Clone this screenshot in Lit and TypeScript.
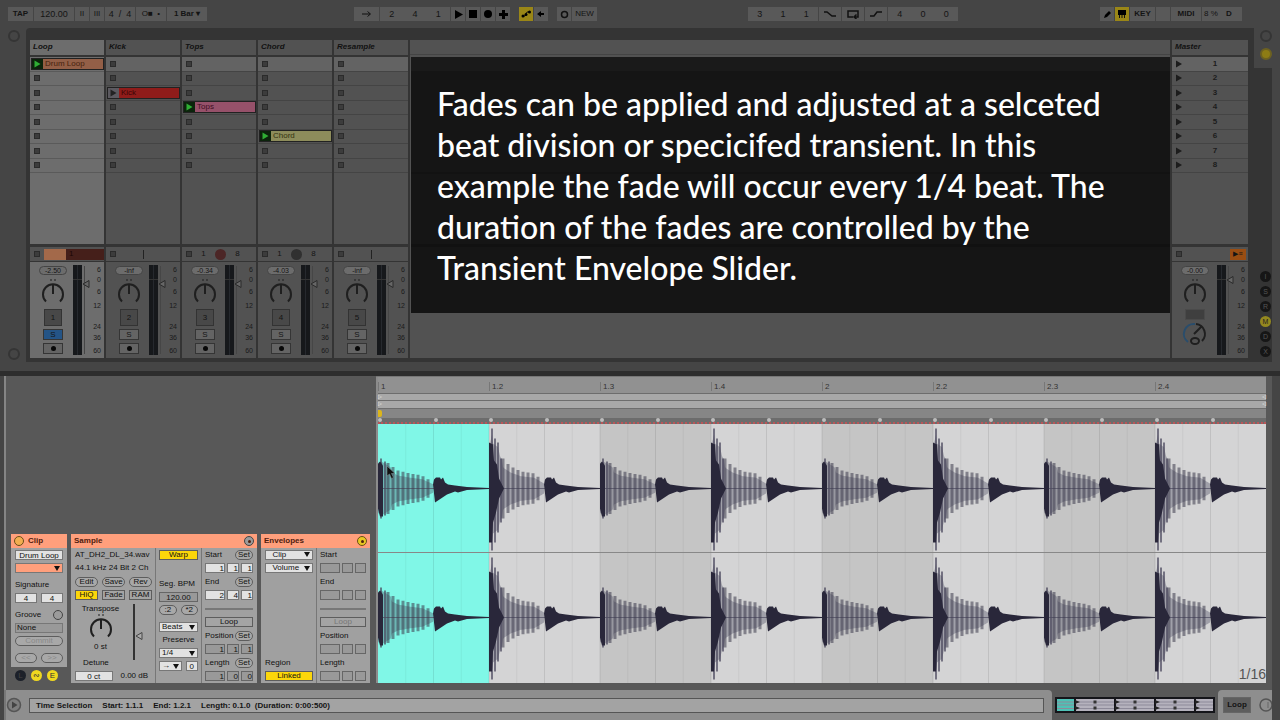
import { LitElement, html, svg, css } from "lit";
import { customElement } from "lit/decorators.js";

interface Clip { row: number; name: string; kind: string; playing: boolean; }
interface Track { name: string; num: string; vol: string; clip?: Clip; status: string; selected?: boolean; }

const TRACKS: Track[] = [
  { name: "Loop", num: "1", vol: "-2.50", clip: { row: 0, name: "Drum Loop", kind: "orange", playing: true }, status: "progress", selected: true },
  { name: "Kick", num: "2", vol: "-inf", clip: { row: 2, name: "Kick", kind: "red", playing: false }, status: "line" },
  { name: "Tops", num: "3", vol: "-0.34", clip: { row: 3, name: "Tops", kind: "pink", playing: true }, status: "pieRed" },
  { name: "Chord", num: "4", vol: "-4.03", clip: { row: 5, name: "Chord", kind: "yellow", playing: true }, status: "pie" },
  { name: "Resample", num: "5", vol: "-inf", status: "line" },
];
const ROWS = [0, 1, 2, 3, 4, 5, 6, 7];
const BEATS = ["1", "1.2", "1.3", "1.4", "2", "2.2", "2.3", "2.4"];
const SCALE: [string, number][] = [["6", 8], ["0", 18], ["6", 30], ["12", 44], ["24", 65], ["36", 76], ["60", 89]];

const knob = (cls = "") => svg`
  <svg class="knob ${cls}" width="26" height="28" viewBox="0 0 26 28" aria-hidden="true">
    <path d="M10 1h2M14 1h2" stroke="currentColor" fill="none"/>
    <path class="arc" d="M6 22.5A10 10 0 1 1 20 22.5" fill="none" stroke="currentColor" stroke-width="2"/>
    <path d="M13 15V5" stroke="currentColor" stroke-width="2"/>
  </svg>`;

const meter = (y = 22) => svg`
  <svg class="meter" width="32" height="96" viewBox="0 0 32 96" aria-hidden="true">
    <rect x="1" y="3" width="9" height="90" fill="#16181b"/>
    <path d="M5.5 3V93" stroke="#26292e"/>
    <path d="M1 17.5H10" stroke="#333"/>
    <path d="M12.5 4V92" stroke="#464646" stroke-width="1"/>
    <path d="M11 ${y}L17 ${y - 3.5}V${y + 3.5}Z" fill="#666" stroke="#2a2a2a"/>
    ${SCALE.map(([t, ty]) => svg`<text x="29" y="${ty + 2}" text-anchor="end">${t}</text>`)}
  </svg>`;

const play = svg`<svg width="10" height="10" viewBox="0 0 10 10" aria-hidden="true"><path d="M2 1.5L8 5L2 8.5Z" fill="currentColor"/></svg>`;

/* Half height of the decaying part of a beat at distance x from its start. */
function envelope(x: number, loud: boolean): number {
  const pts = loud
    ? [[0, 46], [1, 50], [3, 60], [4, 50], [9, 46], [11, 36], [15, 28], [22, 22], [32, 17], [45, 15], [55, 7]]
    : [[0, 27], [3, 30], [8, 27], [13, 23], [20, 18], [32, 15], [44, 13], [55, 6]];
  for (let i = 1; i < pts.length; i++) {
    if (x <= pts[i][0]) {
      const [x0, y0] = pts[i - 1];
      const [x1, y1] = pts[i];
      return y0 + ((y1 - y0) * (x - x0)) / (x1 - x0);
    }
  }
  return 6;
}

function beatWave(i: number, cy: number) {
  const x0 = i * 111;
  const loud = i % 2 === 1;
  const up: string[] = [];
  const dn: string[] = [];
  for (let x = 0; x < 56; x++) {
    const h = envelope(x, loud) * (x < 14 ? 0.9 : 0.72);
    up.push(`${x0 + x},${cy - h}`);
    dn.unshift(`${x0 + x},${cy + h}`);
  }
  let bars = "";
  for (let x = loud ? 14 : 10; x < 54; x += 5) {
    const h = envelope(x, loud);
    bars += `M${x0 + x} ${cy - h}V${cy + h}`;
  }
  const head = loud
    ? `M${x0} ${cy - 46}L${x0 + 4} ${cy - 44}L${x0 + 5} ${cy - 28}L${x0 + 8} ${cy - 24}L${x0 + 10} ${cy - 10}L${x0 + 15} ${cy}L${x0 + 10} ${cy + 10}L${x0 + 7} ${cy + 24}L${x0 + 4} ${cy + 34}L${x0 + 3} ${cy + 54}H${x0}Z`
    : `M${x0} ${cy - 25}L${x0 + 2} ${cy - 27}L${x0 + 5} ${cy - 23}V${cy + 28}H${x0 + 2}L${x0} ${cy + 20}Z`;
  const h = x0 + 55;
  const hit = `M${h} ${cy - 4}L${h + 1} ${cy - 9}L${h + 3} ${cy - 11}H${h + 7}L${h + 8} ${cy - 9}L${h + 10} ${cy - 11}L${h + 12} ${cy - 6}L${h + 15} ${cy - 4}L${h + 22} ${cy - 3}L${h + 34} ${cy - 1.5}L${h + 56} ${cy - 0.5}V${cy + 0.5}L${h + 34} ${cy + 1.5}L${h + 25} ${cy + 4}L${h + 22} ${cy + 3}L${h + 14} ${cy + 6}L${h + 8} ${cy + 10}L${h + 2} ${cy + 14}Z`;
  const body = loud
    ? `M${x0 + 3} ${cy - 60}V${cy + 62}M${x0 + 6} ${cy - 50}V${cy + 54}M${x0 + 9} ${cy - 46}V${cy + 44}M${x0 + 12} ${cy - 30}V${cy + 34}`
    : `M${x0 + 3} ${cy - 30}V${cy + 30}M${x0 + 7} ${cy - 27}V${cy + 27}`;
  return svg`
    <polygon points="${up.join(" ")} ${dn.join(" ")}" fill="#4d4b60" fill-opacity=".38"/>
    <path d="${bars}" stroke="#3c3a4c" stroke-opacity=".55" stroke-width="3" fill="none"/>
    <path d="${body}" stroke="#4a475c" stroke-opacity=".7" stroke-width="2" fill="none"/>
    <path d="${head}" fill="#29273a"/>
    <path d="${hit}" fill="#29273a"/>`;
}

@customElement("app-root")
export class AppRoot extends LitElement {
  static styles = css`
    :host { display: flex; flex-direction: column; min-height: 100vh; background: #454545; color: #141414;
      font: 8px/10px "Liberation Sans", Arial, sans-serif; }
    * { box-sizing: border-box; }
    button, input, select { font: inherit; color: inherit; margin: 0; padding: 0; border: 0; border-radius: 0; background: none; min-width: 0; appearance: none; text-align: center; }
    h2, h3, p { margin: 0; font: inherit; }
    svg { display: block; flex: none; }

    /* transport */
    .transport { display: grid; grid-template-columns: 346fr 394fr 352fr 172px; align-items: start; height: 28px; padding: 7px 8px 0; }
    .strip { display: flex; gap: 1px; height: 14px; }
    .strip > * { background: #595959; height: 14px; display: flex; align-items: center; justify-content: center; color: #141414; }
    .strip .on { background: #9a8617; }
    .w14 { width: 14px; } .w22 { width: 22px; } .w25 { width: 25px; } .w30 { width: 30px; } .w40 { width: 40px; } .w72 { width: 70px; }
    .strip input, .pos { font-size: 9px; }
    .pos { display: flex; justify-content: space-around; }
    .gap { margin-left: 8px; }
    .b { font-weight: bold; }

    /* session */
    .session { display: flex; padding-right: 8px; }
    .lrail { width: 26px; padding: 2px 8px; display: flex; flex-direction: column; justify-content: space-between; color: #303030; }
    .frame { flex: 1; min-width: 0; display: flex; background: #343434; border-radius: 4px 0 0 0; padding: 12px 0 4px 4px; }
    .tracks { flex: 1; min-width: 0; display: grid; grid-template-columns: repeat(5, 74px) minmax(0, 1fr) 76px; gap: 2px; }
    .track { display: flex; flex-direction: column; background: #343434; }
    .name { height: 15px; background: #525252; padding: 2px 3px; font-weight: bold; font-style: italic; color: #111; }
    .slots { height: 116px; margin-top: 2px; display: grid; grid-template-rows: repeat(8, minmax(0, 1fr)); background: #525252; }
    .slot { display: flex; align-items: center; border-bottom: 1px solid #444; padding-left: 4px; }
    .slot.first { background: #636363; }
    .stop { width: 6px; height: 6px; background: #3c3c3c; border: 1px solid #2b2b2b; }
    .clip { flex: 1; height: 12px; margin-left: -3px; display: flex; border: 1px solid #222; background: #222; }
    .clip svg { background: #0c240c; color: #2fae34; width: 11px; }
    .clip.idle svg { background: #5c5a60; color: #222; }
    .clip span { flex: 1; text-align: left; padding-left: 2px; }
    .orange span { background: #935f47; color: #46210d; }
    .red span { background: #8f1c1a; color: #3a0505; }
    .pink span { background: #96516a; color: #400d22; }
    .yellow span { background: #8d8c5b; color: #33320f; }
    .empty { flex: 1; min-height: 71px; background: #525252; }
    .status { height: 14px; margin-top: 3px; background: #525252; display: flex; align-items: center; padding-left: 4px; gap: 6px; }
    .status .bar { flex: 1; display: flex; height: 11px; background: #451f1a; margin-left: -2px; color: #1c0605; }
    .status .bar i { width: 22px; background: #a3694a; margin-right: 3px; }
    .status .vline { width: 1px; height: 9px; background: #222; margin-left: 21px; }
    .status .pie { width: 11px; height: 11px; border-radius: 50%; background: #303030; }
    .status .pie.r { background: #4c2626; }
    .status .n { width: 11px; text-align: center; }
    .mix { height: 96px; margin-top: 1px; background: #525252; display: flex; justify-content: space-between; }
    .strips { width: 42px; display: flex; flex-direction: column; align-items: center; padding: 4px 0 0 4px; }
    .vol { width: 28px; height: 9px; border-radius: 5px; background: #6c6c6c; border: 1px solid #444; line-height: 7px; font-size: 7px; }
    .knob { margin: 4px 0 2px; color: #1f1f1f; }
    .sq { width: 18px; height: 17px; border: 1px solid #333; background: #484848; }
    .small { width: 20px; height: 11px; margin-top: 3px; border: 1px solid #353535; background: #646464; display: grid; place-items: center; line-height: 9px; }
    .small.solo { background: #245486; }
    .rec { width: 5px; height: 5px; border-radius: 50%; background: #080808; }
    .meter text { font: 7px "Liberation Sans", sans-serif; fill: #1a1a1a; }
    .sel .name, .sel .slot, .sel .empty, .sel .mix { background: #6d6d6d; }
    .sel .slot { border-bottom-color: #5a5a5a; }
    .zone { display: flex; flex-direction: column; background: #525252; }
    .zone .line { height: 15px; border-bottom: 1px solid #444; }
    .note { margin: 2px 0 0 1px; padding: 26px 0 25px 26px; background: linear-gradient(#1a1a1a 14px, #151515 14px 115px, #121212 115px 117px, #151515 117px 187px, #111 187px 190px, #151515 190px);
      color: #fff; font: 500 32px/41px Lato, sans-serif; white-space: nowrap; }
    .note span { display: block; }
    .master .slot { color: #1c1c1c; padding-left: 2px; }
    .master .slot span { flex: 1; text-align: center; font-weight: bold; padding-right: 2px; }
    .master .status { justify-content: space-between; padding-right: 2px; }
    .back { background: #9a4d12; width: 16px; height: 11px; font-size: 7px; }
    .cue { width: 20px; height: 11px; background: #3f3f3f; border: 1px solid #4a4a4a; }
    .rrail { width: 24px; margin-top: -12px; display: flex; flex-direction: column; align-items: flex-end; justify-content: space-between; }
    .rtop { width: 18px; height: 40px; background: #454545; padding: 2px 0 0 6px; display: flex; flex-direction: column; gap: 6px; }
    .dots { display: flex; flex-direction: column; gap: 4px; padding: 0 1px 1px 0; }
    .dot { width: 11px; height: 11px; border-radius: 50%; background: #161616; color: #555; font-size: 7px; line-height: 11px; }
    .dot.y { background: #94881f; color: #222; }
    .ring { width: 12px; height: 12px; border-radius: 50%; border: 2px solid #353535; }
    .ring.y { border-color: #6d6120; background: #8d7c14; }
    .divide { height: 14px; border-bottom: 5px solid #2d2d2d; }

    /* detail view */
    .detail { flex: 1; display: flex; margin: 0 8px 0 4px; padding: 0 6px 7px 5px; background: #585858; border-left: 2px solid #858585; }
    .boxes { width: 365px; display: flex; align-items: flex-end; gap: 4px; }
    .panel { background: #a0a0a0; color: #111; }
    .title { height: 14px; background: #ff9f7c; display: flex; align-items: center; padding: 0 3px; gap: 4px; font-weight: bold; color: #50200e; }
    .title .sp { flex: 1; }
    .lamp { width: 10px; height: 10px; border-radius: 50%; border: 1px solid #6b4d19; background: #f2ae50; display: grid; place-items: center; }
    .lamp.g { background: #9b9b9b; border-color: #444; }
    .lamp.yl { background: #e9c820; }
    .lamp::after { content: ""; width: 3px; height: 3px; border-radius: 50%; background: currentColor; }
    .lamp.o::after { display: none; }
    .clipcol { width: 56px; }
    .clipbody { display: flex; flex-direction: column; gap: 3px; padding: 2px 4px 3px; height: 119px; }
    .row { display: flex; align-items: center; gap: 4px; }
    .row > * { flex: 1; }
    .between { display: flex; align-items: center; justify-content: space-between; }
    .push { margin-top: 4px; }
    .field { height: 10px; width: 100%; background: #e2e2e2; border: 1px solid #777; line-height: 8px; }
    .off { background: #999; border-color: #666; }
    .pill { height: 10px; border: 1px solid #5d5d5d; border-radius: 5px; background: #a8a8a8; line-height: 8px; }
    .pill.dim { color: #888; }
    .btn { height: 10px; width: 100%; border: 1px solid #5d5d5d; background: #a4a4a4; line-height: 8px; }
    .btn.dim { color: #777; }
    .yel { background: #fbd60a; }
    .field.sel2 { text-align: left; padding: 0 8px 0 2px; background: #e2e2e2 url("data:image/svg+xml,%3Csvg xmlns='http://www.w3.org/2000/svg' width='6' height='5'%3E%3Cpath d='M0 0h6l-3 5z' fill='%23111'/%3E%3C/svg%3E") no-repeat right 2px center; }
    .field.tint { background-color: #ff9f7c; }
    .field.none { background: #999; text-align: left; padding-left: 1px; }
    .bubbles { display: flex; gap: 5px; height: 16px; padding: 3px 4px 0; }
    .bubble { width: 11px; height: 11px; border-radius: 50%; background: #f0d820; color: #333; line-height: 11px; font-size: 8px; }
    .bubble.k { background: #1c2029; color: #444; }
    .sample { width: 186px; }
    .env { width: 109px; }
    .cols { display: flex; padding: 0 4px; height: 135px; }
    .cols > * + * { border-left: 1px solid #777; margin-left: 3px; padding-left: 3px; }
    .ten { display: grid; grid-template-rows: repeat(10, minmax(0, 1fr)); align-items: center; }
    .ca { width: 77px; white-space: nowrap; }
    .cb { width: 43px; display: flex; flex-direction: column; gap: 3px; padding-top: 2px; }
    .cc { flex: 1; }
    .cb .seg { margin-top: 16px; white-space: nowrap; }
    .triple { display: grid; grid-template-columns: 20px 1fr 1fr; gap: 2px; }
    .triple input { text-align: right; }
    .set { width: 18px; flex: none; }
    .hr { height: 2px; background: #777; }
    .tr { grid-row: 5 / 9; display: flex; height: 100%; }
    .tr > div { flex: 1; display: flex; flex-direction: column; align-items: center; padding-top: 2px; }
    .tr .knob { margin: 0; }
    .tr .fader { margin-top: 1px; }
    .det { padding-left: 8px; }
    .center { text-align: center; }
    .envl { width: 48px; }
    .start9 { grid-row: 9; }
    .start10 { grid-row: 10; }

    /* sample editor */
    .editor { flex: 1; min-width: 0; display: flex; flex-direction: column; background: #8c8c8c; border-top: 1px solid #777; padding-left: 2px; position: relative; }
    .ruler { display: grid; grid-template-columns: repeat(8, minmax(0, 1fr)); height: 16px; padding-top: 5px; background: #919191; }
    .ruler span { border-left: 1px solid #777; padding-left: 2px; height: 9px; line-height: 9px; color: #333; }
    .lane { height: 8px; border: solid #6d6d6d; border-width: 1px 0; background: #a8a8a8; display: flex; justify-content: space-between; color: #ddd; line-height: 6px; }
    .lane + .lane { border-top: 0; }
    .mark { height: 9px; background: #868686; }
    .mark i { display: block; width: 4px; height: 7px; margin-top: 1px; background: #dbb51a; border-radius: 0 2px 2px 0; }
    .trans { height: 6px; display: grid; grid-template-columns: repeat(16, minmax(0, 1fr)); background: #6c6c6c; border-bottom: 2px dotted #b95558; }
    .trans i { width: 4px; height: 4px; background: #bdbdbd; border-radius: 50%; }
    .waves { flex: 1; min-height: 240px; width: 100%; }
    .grid { position: absolute; right: 0; bottom: 0; font-size: 14px; line-height: 17px; color: #555; }
    .cursor { position: absolute; left: 10px; top: 89px; }

    /* status bar */
    .foot { height: 30px; display: flex; align-items: center; gap: 3px; margin: 0 8px 0 4px; background: #585858; }
    .fleft { flex: 1; min-width: 0; height: 30px; background: #8e8e8e; border-left: 2px solid #777; display: flex; align-items: center; gap: 7px; padding-right: 8px; border-radius: 0 4px 0 0; }
    .msg { flex: 1; height: 15px; border: 1px solid #555; background: #a3a3a3; font-weight: bold; line-height: 13px; padding-left: 6px; display: flex; gap: 10px; }
    .over { width: 160px; height: 16px; }
    .fright { width: 54px; height: 30px; background: #8e8e8e; display: flex; align-items: center; gap: 8px; padding-left: 5px; border-radius: 4px 0 0 0; overflow: hidden; }
    .lp { width: 28px; height: 16px; background: #5e5e5e; border: 1px solid #666; font-weight: bold; flex: none; }
  `;

  private slotCell(t: Track, r: number) {
    const c = t.clip;
    return html`<div class="slot ${r === 0 ? "first" : ""}">
      ${c && c.row === r
        ? html`<button class="clip ${c.kind} ${c.playing ? "" : "idle"}">${play}<span>${c.name}</span></button>`
        : html`<button class="stop" aria-label="Stop"></button>`}
    </div>`;
  }

  private status(t: Track) {
    if (t.status === "progress") return html`<span class="bar"><i></i>1</span>`;
    if (t.status === "line") return html`<span class="vline"></span>`;
    return html`<span class="n">1</span><span class="pie ${t.status === "pieRed" ? "r" : ""}"></span><span class="n">8</span>`;
  }

  private track(t: Track) {
    return html`<section class="track ${t.selected ? "sel" : ""}">
      <h2 class="name">${t.name}</h2>
      <div class="slots">${ROWS.map((r) => this.slotCell(t, r))}</div>
      <div class="empty"></div>
      <div class="status"><button class="stop" aria-label="Stop"></button>${this.status(t)}</div>
      <div class="mix">
        <div class="strips">
          <input class="vol" aria-label="Volume" .value=${t.vol}>
          ${knob()}
          <button class="sq">${t.num}</button>
          <button class="small ${t.selected ? "solo" : ""}">S</button>
          <button class="small" aria-label="Arm"><span class="rec"></span></button>
        </div>
        ${meter()}
      </div>
    </section>`;
  }

  private triple(label: string, vals: string[], off = false) {
    return html`<div class="triple">${vals.map((v) => html`<input class="field ${off ? "off" : ""}" aria-label=${label} .value=${v}>`)}</div>`;
  }

  private region(set: boolean) {
    const v = (a: string[]) => (set ? a : ["", "", ""]);
    const head = (n: string) => html`<div class="between"><span>${n}</span>${set ? html`<button class="pill set">Set</button>` : ""}</div>`;
    return html`<div class="ten cc">
      ${head("Start")}${this.triple("Start", v(["1", "1", "1"]), !set)}
      ${head("End")}${this.triple("End", v(["2", "4", "1"]), !set)}
      <div class="hr"></div>
      <button class="btn ${set ? "" : "dim"}">Loop</button>
      ${head("Position")}${this.triple("Position", v(["1", "1", "1"]), true)}
      ${head("Length")}${this.triple("Length", v(["1", "0", "0"]), true)}
    </div>`;
  }

  render() {
    return html`
      <header class="transport">
        <div class="strip">
          <button class="w25 b">TAP</button><input class="w40" aria-label="Tempo" value="120.00"><button class="w14">II</button><button class="w14">III</button>
          <input class="w30" aria-label="Time signature" value="4  /  4"><button class="w30">O■&nbsp; •</button><button class="w40 b">1 Bar ▾</button>
        </div>
        <div class="strip">
          <button class="w25" aria-label="Follow">
            <svg width="10" height="8" viewBox="0 0 10 8"><path d="M0 4H8M5.5 1.5L8.5 4L5.5 6.5" stroke="#111" fill="none"/></svg></button>
          <div class="pos w72"><span>2</span><span>4</span><span>1</span></div>
          <button class="w14" aria-label="Play"><svg width="9" height="9" viewBox="0 0 9 9"><path d="M1 0L9 4.5L1 9Z"/></svg></button>
          <button class="w14" aria-label="Stop"><svg width="8" height="8" viewBox="0 0 8 8"><path d="M0 0H8V8H0Z"/></svg></button>
          <button class="w14" aria-label="Record"><svg width="8" height="8" viewBox="0 0 8 8"><circle cx="4" cy="4" r="4"/></svg></button>
          <button class="w14" aria-label="Overdub"><svg width="9" height="9" viewBox="0 0 9 9"><path d="M4.5 0V9M0 4.5H9" stroke="#000" stroke-width="3"/></svg></button>
          <button class="w14 on gap" aria-label="Automation"><svg width="10" height="8" viewBox="0 0 10 8"><path d="M1 6H4L6 2H9" stroke="#111" fill="none"/><circle cx="2" cy="6" r="1.5"/><circle cx="5" cy="4.5" r="1.5"/><circle cx="8.5" cy="2" r="1.5"/></svg></button>
          <button class="w14" aria-label="Re-enable"><svg width="8" height="8" viewBox="0 0 8 8"><path d="M0 4L4 1V3H7V5H4V7Z"/></svg></button>
          <button class="w14 gap" aria-label="Session record"><svg width="9" height="9" viewBox="0 0 9 9"><circle cx="4.5" cy="4.5" r="3" fill="none" stroke="#111" stroke-width="1.5"/></svg></button>
          <button class="w25">NEW</button>
        </div>
        <div class="strip">
          <div class="pos w72"><span>3</span><span>1</span><span>1</span></div>
          <button class="w22" aria-label="Punch in"><svg width="12" height="8" viewBox="0 0 12 8"><path d="M0 2H3L8 6H12" stroke="#111" stroke-width="1.5" fill="none"/></svg></button>
          <button class="w22" aria-label="Loop"><svg width="12" height="9" viewBox="0 0 12 9"><path d="M6 7H1V1H11V7H8M9.5 4.5L7 7L9.5 9" stroke="#111" stroke-width="1.5" fill="none"/></svg></button>
          <button class="w22" aria-label="Punch out"><svg width="12" height="8" viewBox="0 0 12 8"><path d="M0 6H4L7 2H12" stroke="#111" stroke-width="1.5" fill="none"/></svg></button>
          <div class="pos w72"><span>4</span><span>0</span><span>0</span></div>
        </div>
        <div class="strip">
          <button class="w14" aria-label="Draw"><svg width="9" height="9" viewBox="0 0 9 9"><path d="M1 8L2 5L6 1L8 3L4 7Z"/></svg></button>
          <button class="w14 on" aria-label="Keyboard"><svg width="8" height="8" viewBox="0 0 8 8"><path d="M0 0H8V5H0Z"/><path d="M1.5 5V8M4 5V8M6.5 5V8" stroke="#111"/></svg></button>
          <button class="w25 b">KEY</button><span class="w14"></span><button class="w30 b">MIDI</button><span class="w40">8 %</button><button class="w22 b">D</button>
        </div>
      </header>

      <main class="session">
        <div class="lrail"><span class="ring"></span><span class="ring"></span></div>
        <div class="frame">
          <div class="tracks">
            ${TRACKS.map((t) => this.track(t))}
            <div class="zone">
              <div class="line"></div>
              <p class="note"><span>Fades can be applied and adjusted at a selceted</span><span>beat division or specicifed transient. In this</span><span>example the fade will occur every 1/4 beat. The</span><span>duration of the fades are controlled by the</span><span>Transient Envelope Slider.</span></p>
            </div>
            <section class="track master">
              <h2 class="name">Master</h2>
              <div class="slots">${ROWS.map((r) => html`<div class="slot ${r === 0 ? "first" : ""}">${play}<span>${r + 1}</span></div>`)}</div>
              <div class="empty"></div>
              <div class="status"><button class="stop" aria-label="Stop all"></button><button class="back" aria-label="Back to arrangement">▶≡</button></div>
              <div class="mix">
                <div class="strips"><input class="vol" aria-label="Master volume" value="-0.00">${knob()}
                  <button class="cue" aria-label="Cue"></button>
                  <svg width="26" height="26" viewBox="0 0 26 26" aria-hidden="true"><path d="M6 22A10 10 0 0 1 13 4" stroke="#294d6c" stroke-width="2" fill="none"/><path d="M14 4A10 10 0 0 1 20 21M12 14L19 7M9 21a4 3 0 1 0 8 0a4 3 0 1 0-8 0" stroke="#1f1f1f" stroke-width="2" fill="none"/></svg>
                </div>
                ${meter(18)}
              </div>
            </section>
          </div>
          <div class="rrail">
            <div class="rtop"><span class="ring"></span><span class="ring y"></span></div>
            <div class="dots">${["I", "S", "R", "M", "D", "X"].map((d) => html`<button class="dot ${d === "M" ? "y" : ""}">${d}</button>`)}</div>
          </div>
        </div>
      </main>
      <div class="divide"></div>

      <section class="detail">
        <div class="boxes">
          <div class="clipcol">
            <div class="panel">
              <h3 class="title"><span class="lamp o"></span>Clip</h3>
              <div class="clipbody">
                <input class="field" aria-label="Clip name" value="Drum Loop">
                <select class="field sel2 tint" aria-label="Clip color"><option></option></select>
                <span class="push">Signature</span>
                <div class="row"><input class="field" aria-label="Numerator" value="4"><input class="field" aria-label="Denominator" value="4"></div>
                <div class="between push"><span>Groove</span><span class="lamp g o"></span></div>
                <select class="field none" aria-label="Groove"><option>None</option></select>
                <button class="pill dim">Commit</button>
                <div class="row push"><button class="pill dim">&lt;&lt;</button><button class="pill dim">&gt;&gt;</button></div>
              </div>
            </div>
            <div class="bubbles"><button class="bubble k">L</button><button class="bubble">∾</button><button class="bubble">E</button></div>
          </div>

          <div class="panel sample">
            <h3 class="title">Sample<span class="sp"></span><span class="lamp g"></span></h3>
            <div class="cols">
              <div class="ten ca">
                <span>AT_DH2_DL_34.wav</span><span>44.1 kHz 24 Bit 2 Ch</span>
                <div class="row"><button class="pill">Edit</button><button class="pill">Save</button><button class="pill">Rev</button></div>
                <div class="row"><button class="btn yel">HiQ</button><button class="btn">Fade</button><button class="btn">RAM</button></div>
                <div class="tr">
                  <div><span>Transpose</span>${knob()}<span>0 st</span></div>
                  <svg class="fader" width="26" height="58" viewBox="0 0 26 58" aria-hidden="true"><path d="M8 1V57" stroke="#333" stroke-width="2"/><path d="M10 33L16 29.5V36.5Z" fill="#aaa" stroke="#444"/></svg>
                </div>
                <label class="det" for="detune">Detune</label>
                <div class="row"><input id="detune" class="field" value="0 ct"><span class="center">0.00 dB</span></div>
              </div>
              <div class="cb">
                <button class="btn yel">Warp</button>
                <label class="seg" for="bpm">Seg. BPM</label>
                <input id="bpm" class="field off" value="120.00">
                <div class="row"><button class="pill">:2</button><button class="pill">*2</button></div>
                <select class="field sel2 push" aria-label="Warp mode"><option>Beats</option></select>
                <label for="pres" class="center">Preserve</label>
                <select id="pres" class="field sel2"><option>1/4</option></select>
                <div class="row"><select class="field sel2" aria-label="Loop mode"><option>→</option></select><input class="field" aria-label="Transient envelope" value="0"></div>
              </div>
              ${this.region(true)}
            </div>
          </div>

          <div class="panel env">
            <h3 class="title">Envelopes<span class="sp"></span><span class="lamp yl"></span></h3>
            <div class="cols">
              <div class="ten envl">
                <select class="field sel2" aria-label="Device"><option>&nbsp; Clip</option></select>
                <select class="field sel2" aria-label="Control"><option>&nbsp; Volume</option></select>
                <span class="start9">Region</span><button class="btn yel start10">Linked</button>
              </div>
              ${this.region(false)}
            </div>
          </div>
        </div>

        <div class="editor">
          <div class="ruler">${BEATS.map((b) => html`<span>${b}</span>`)}</div>
          <div class="lane"><span>▹</span><span>◃</span></div>
          <div class="lane"><span>▹</span><span>◃</span></div>
          <div class="mark"><i></i></div>
          <div class="trans">${Array.from({ length: 16 }, () => html`<i></i>`)}</div>
          <svg class="waves" viewBox="0 0 888 259" preserveAspectRatio="none" role="img" aria-label="Waveform">
            ${BEATS.map((_, i) => svg`<rect x="${i * 111}" y="0" width="111" height="259" fill="${i === 0 ? "#80f7e7" : i % 2 ? "#d4d4d5" : "#c5c5c5"}"/>`)}
            ${Array.from({ length: 31 }, (_, i) => svg`<path d="M${(i + 1) * 27.75} 0V259" stroke="#000" stroke-opacity="${i % 2 ? 0.09 : 0.05}"/>`)}
            <path d="M0 64.5H888M0 193.5H888" stroke="#4b495c" stroke-opacity=".7"/>
            <path d="M0 128.5H888" stroke="#888"/>
            ${BEATS.map((_, i) => svg`${beatWave(i, 64.5)}${beatWave(i, 193.5)}`)}
          </svg>
          <span class="grid">1/16</span>
          <svg class="cursor" width="10" height="14" viewBox="0 0 10 14" aria-hidden="true"><path d="M1 0V10L3.5 8L5.5 12.5L7.5 11.5L5.5 7.5H9Z" fill="#111" stroke="#7a8f92" stroke-width=".6"/></svg>
        </div>
      </section>

      <footer class="foot">
        <div class="fleft">
          <svg width="16" height="16" viewBox="0 0 16 16" aria-hidden="true"><circle cx="8" cy="8" r="6.5" fill="#7e7e7e" stroke="#555" stroke-width="1.5"/><path d="M6 4.5L11.5 8L6 11.5Z" fill="#444"/></svg>
          <div class="msg"><span>Time Selection</span><span>Start: 1.1.1</span><span>End: 1.2.1</span><span>Length: 0.1.0 &nbsp;(Duration: 0:00:500)</span></div>
        </div>
        <svg class="over" viewBox="0 0 160 16" aria-hidden="true">
          <rect width="160" height="16" fill="#15151a"/><rect x="2" y="2" width="156" height="12" fill="#b5b2bd"/><rect x="2" y="2" width="18" height="12" fill="#4fc2b6"/>
          <path d="M2 8H158M2 5H158M2 11.5H158" stroke="#8d8a99"/>
          ${[20, 60, 100, 140].map((x) => svg`<path d="M${x} 2V14" stroke="#15151a" stroke-width="2"/><path d="M${x} 3l5 2l-5 2zM${x} 9l5 2l-5 2z" fill="#222"/>`)}
          ${[40, 80, 120].map((x) => svg`<path d="M${x} 3.5v3M${x} 9.5v3" stroke="#333" stroke-width="3"/>`)}
          <rect x="158" width="2" height="16" fill="#15151a"/>
        </svg>
        <div class="fright"><button class="lp">Loop</button>
          <svg width="14" height="14" viewBox="0 0 14 14" aria-hidden="true"><circle cx="7" cy="7" r="6" fill="none" stroke="#555" stroke-width="1.5"/><path d="M9 4v6" stroke="#666"/></svg></div>
      </footer>`;
  }
}
